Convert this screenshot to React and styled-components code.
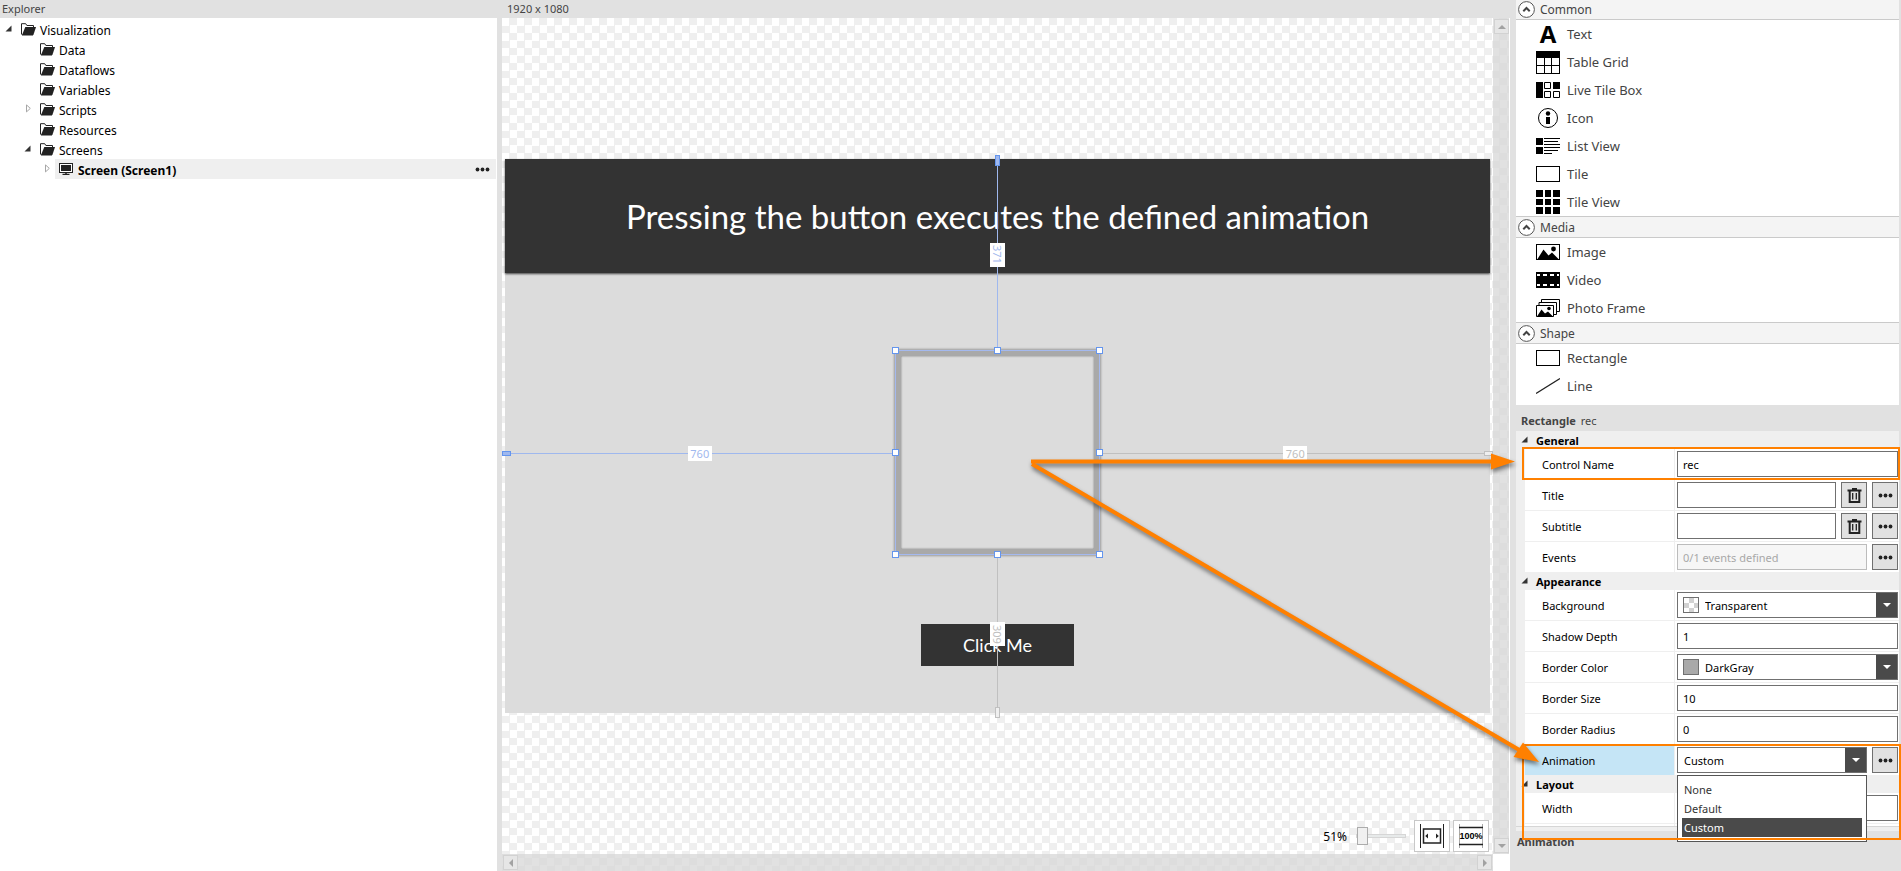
import React from 'react';
import styled, { createGlobalStyle, css } from 'styled-components';

const GlobalStyle = createGlobalStyle`
  * { box-sizing: border-box; }
  body { margin: 0; background: #e1e1e1; }
  body, button, input, select {
    font-family: "Noto Sans", "Open Sans", sans-serif;
    font-size: 11px;
    color: #000;
  }
  button { padding: 0; border: 0; background: none; }
  h1, h2, h3, ul, p { margin: 0; padding: 0; font-size: inherit; font-weight: inherit; }
  ul { list-style: none; }
`;

const checker = css`
  background: repeating-conic-gradient(#efefef 0 25%, #fff 0 50%) 0 0 / 15px 15px;
`;

const Workbench = styled.div`
  position: relative;
  display: grid;
  grid-template-columns: 497px minmax(0, 1fr) 391px;
  height: 100vh;
  min-height: 860px;
  overflow: hidden;
`;

/* ---------- Explorer ---------- */

const Explorer = styled.nav`
  display: flex;
  flex-direction: column;
`;

const PaneTitle = styled.h2`
  height: 18px;
  padding-left: ${(p) => p.$indent}px;
  line-height: 18px;
  color: #444;
`;

const Tree = styled.ul`
  flex: 1;
  padding-top: 1px;
  background: #fff;
`;

const TreeRow = styled.li`
  display: flex;
  height: 20px;
  padding-left: ${(p) => p.$depth * 19}px;
  padding-right: 1px;
  font-size: 12px;
`;

const Twisty = styled.span`
  display: flex;
  flex: none;
  align-items: center;
  width: 17px;
  padding-left: 5px;
  padding-bottom: 2px;
`;

const TreeLabel = styled.span`
  display: flex;
  flex: 1;
  align-items: center;
  gap: 4px;
  padding: 0 6px 0 4px;
  background: ${(p) => (p.$selected ? '#efefef' : 'transparent')};
  font-weight: ${(p) => (p.$selected ? 700 : 400)};
  line-height: 20px;
`;

const TreeText = styled.span`
  flex: 1;
  padding-top: 3px;
  line-height: 17px;
`;

const DotsButton = styled.button`
  display: flex;
  align-items: center;
  justify-content: center;
  height: 20px;
`;

/* ---------- Canvas ---------- */

const Designer = styled.main`
  display: flex;
  flex-direction: column;
  min-width: 0;
  padding-left: 5px;
`;

const Viewport = styled.div`
  display: grid;
  flex: 1;
  grid-template-columns: minmax(0, 1fr) 16px;
  grid-template-rows: minmax(0, 1fr) 17px;
  border-right: 1px solid #fff;
  ${checker}
`;

const Stage = styled.div`
  position: relative;
  display: flex;
  align-items: center;
  justify-content: center;
`;

const Scene = styled.section`
  position: relative;
  width: calc(100% - 6px);
  height: 554px;
  background: #dcdcdc;
`;

const Banner = styled.h1`
  display: flex;
  align-items: center;
  justify-content: center;
  height: 114px;
  background: #333;
  box-shadow: 0 1px 2px rgba(0, 0, 0, 0.7);
  color: #fff;
  font-family: Lato, sans-serif;
  font-size: 33px;
  line-height: 40px;
`;

const SceneButton = styled.button`
  position: absolute;
  right: 0;
  bottom: 47px;
  left: 0;
  width: 153px;
  height: 42px;
  margin: 0 auto;
  background: #333;
  color: #fff;
  font-family: Lato, sans-serif;
  font-size: 18px;
`;

const Shape = styled.div`
  position: absolute;
  top: 191px;
  right: 0;
  left: 0;
  width: 205px;
  height: 205px;
  margin: 0 auto;
  border: 6px solid #a9a9a9;
  box-shadow: 0 0 2px 1px rgba(0, 0, 0, 0.3), inset 0 0 2px rgba(0, 0, 0, 0.5);
`;

const SelectionFrame = styled.div`
  position: absolute;
  inset: -6px;
  border: 1px solid #a4b9ef;
`;

const HandleFrame = styled.div`
  position: absolute;
  top: 192px;
  right: 0;
  left: 1px;
  width: 204px;
  height: 204px;
  margin: 0 auto;
`;

const Handle = styled.span`
  position: absolute;
  top: ${(p) => p.$y};
  left: ${(p) => p.$x};
  width: 7px;
  height: 7px;
  margin: -4px;
  border: 1px solid #6495ed;
  background: #fff;
`;

const Guide = styled.div`
  position: absolute;
  display: flex;
  align-items: center;
  justify-content: center;
  color: ${(p) => (p.$active ? '#9fb8ee' : '#c0c0c0')};
  background: currentColor;
`;

const GuideLeft = styled(Guide)`
  top: 294px;
  left: 0;
  right: calc(50% + 103px);
  height: 1px;
`;

const GuideRight = styled(Guide)`
  top: 294px;
  left: calc(50% + 103px);
  right: 0;
  height: 1px;
`;

const GuideTop = styled(Guide)`
  top: 0;
  left: 0;
  right: 0;
  width: 1px;
  height: 191px;
  margin: 0 auto;
`;

const GuideBottom = styled(Guide)`
  top: 396px;
  bottom: 0;
  left: 0;
  right: 0;
  width: 1px;
  margin: 0 auto;
`;

const GuideValue = styled.span`
  display: flex;
  flex: none;
  align-items: center;
  justify-content: center;
  width: ${(p) => (p.$vertical ? 15 : 24)}px;
  height: ${(p) => (p.$vertical ? 24 : 15)}px;
  background: #fff;
  writing-mode: ${(p) => (p.$vertical ? 'vertical-rl' : 'horizontal-tb')};
  font-size: 11px;
  line-height: 15px;
`;

const Anchor = styled.span`
  position: absolute;
  width: ${(p) => (p.$vertical ? 5 : 9)}px;
  height: ${(p) => (p.$vertical ? 11 : 5)}px;
  border: 1px solid ${(p) => (p.$active ? '#6495ed' : '#c0c0c0')};
  background: ${(p) => (p.$active ? '#9fb8ee' : '#efefef')};
  ${(p) => p.$side === 'left' && 'left: -3px;'}
  ${(p) => p.$side === 'right' && 'right: -3px;'}
  ${(p) => p.$side === 'top' && 'top: -4px;'}
  ${(p) => p.$side === 'bottom' && 'bottom: -5px;'}
`;

const ScrollTrack = styled.div`
  display: flex;
  flex-direction: ${(p) => (p.$vertical ? 'column' : 'row')};
  justify-content: space-between;
  padding: 1px;
  background: rgba(214, 214, 214, 0.72);
`;

const ScrollButton = styled.button`
  display: flex;
  align-items: center;
  justify-content: center;
  width: 15px;
  height: 15px;
  border: 1px solid #d2d2d2;
  background: #e6e6e6;
`;

const Corner = styled.div`
  background: #fff;
`;

const ZoomBar = styled.div`
  position: absolute;
  right: 4px;
  bottom: 2px;
  display: flex;
  align-items: center;
  height: 32px;
  gap: 3px;
`;

const ZoomLabel = styled.label`
  display: flex;
  align-items: center;
  gap: 9px;
  margin-right: 5px;
  font-size: 12px;
`;

const ZoomRange = styled.input`
  width: 50px;
  height: 18px;
  margin: 0;
  appearance: none;
  background: transparent;

  &::-webkit-slider-runnable-track {
    height: 4px;
    border: 1px solid #d6d6d6;
    background: #e7eaea;
  }
  &::-webkit-slider-thumb {
    width: 11px;
    height: 18px;
    margin-top: -8px;
    appearance: none;
    border: 1px solid #acacac;
    border-radius: 0;
    background: #f0f0f0;
  }
`;

const ZoomButton = styled.button`
  display: flex;
  align-items: center;
  justify-content: center;
  width: 36px;
  height: 32px;
  border: 1px solid #c8c8c8;
  background: #fff;
`;

/* ---------- Side panel ---------- */

const SidePanel = styled.aside`
  display: flex;
  flex-direction: column;
  min-height: 0;
  padding: 0 2px 0 6px;
`;

const Palette = styled.div`
  padding-bottom: 5px;
  background: #fff;
`;

const PaletteHeader = styled.button`
  display: flex;
  align-items: center;
  gap: 5px;
  width: 100%;
  height: ${(p) => (p.$first ? 20 : 22)}px;
  padding-top: ${(p) => (p.$first ? 0 : 1)}px;
  padding-left: 2px;
  border-top: ${(p) => (p.$first ? 0 : 1)}px solid #cacaca;
  border-bottom: 1px solid #cacaca;
  background: #f4f4f4;
  color: #444;
  font-size: 12px;
  line-height: 16px;
`;

const PaletteItem = styled.button`
  display: grid;
  grid-template-columns: 24px 1fr;
  align-items: center;
  column-gap: 7px;
  width: 100%;
  height: 28px;
  padding-left: 20px;
  color: #444;
  font-size: 13px;
  line-height: 18px;
  text-align: left;
`;

const LetterIcon = styled.span`
  color: #000;
  font-size: 24px;
  font-weight: 700;
  line-height: 28px;
  text-align: center;
`;

const ObjectTitle = styled.h2`
  display: flex;
  gap: 5px;
  align-items: center;
  height: 26px;
  padding-top: 4px;
  padding-left: 5px;
  color: #444;
`;

const Strong = styled.strong`
  font-weight: 700;
`;

const Properties = styled.div`
  display: flex;
  flex: 1;
  flex-direction: column;
  min-height: 0;
  padding-bottom: 4px;
  background: #efefef;
`;

const Category = styled.h3`
  display: flex;
  flex: none;
  align-items: center;
  gap: 8px;
  height: 18px;
  padding-top: 1px;
  padding-left: 5px;
  font-weight: 700;
  line-height: 16px;

  svg { margin-bottom: 2px; }
`;

const Group = styled.div`
  padding-left: 9px;
  ${(p) => p.$clipped && 'flex: 1; min-height: 0; overflow: hidden; border-bottom: 1px solid #d6d6d6;'}
`;

const PropertyRow = styled.div`
  display: grid;
  grid-template-columns: 149px minmax(0, 1fr);
  column-gap: 1px;
  height: 31px;
  border-bottom: 1px solid #efefef;

  &:last-child { height: 30px; border-bottom: 0; }
`;

const PropertyLabel = styled.label`
  display: flex;
  align-items: center;
  padding-left: 17px;
  background: ${(p) => (p.$selected ? '#c5e5f6' : '#fff')};
`;

const ValueCell = styled.div`
  position: relative;
  display: flex;
  align-items: flex-start;
  gap: 5px;
  padding: 2px 1px 0 2px;
  background: #fff;
`;

const TextBox = styled.input`
  flex: 1;
  min-width: 0;
  height: 26px;
  padding: 0 5px;
  border: 1px solid #707070;
  border-radius: 0;
  background: #fff;
  outline: none;

  &:disabled { border-color: #bcbcbc; background: #f6f6f6; color: #a8a8a8; }
`;

const ToolButton = styled.button`
  display: flex;
  flex: none;
  align-items: center;
  justify-content: center;
  width: 26px;
  height: 26px;
  border: 1px solid #707070;
  background: #e1e1e1;
`;

const Combo = styled.span`
  display: flex;
  flex: 1;
  align-items: center;
  min-width: 0;
  height: 26px;
  padding-left: 5px;
  border: 1px solid #707070;
  background: #fff;
`;

const Swatch = styled.span`
  flex: none;
  width: 16px;
  height: 16px;
  margin-right: 5px;
  border: 1px solid #707070;
  background: ${(p) =>
    p.$color || 'repeating-conic-gradient(#d2d2d2 0 25%, #fff 0 50%) 0 0 / 10px 10px'};
`;

const Select = styled.select`
  flex: 1;
  min-width: 0;
  height: 24px;
  padding: 0 1px;
  appearance: none;
  border: 0;
  background: transparent;
  outline: none;
`;

const ComboArrow = styled.span`
  display: flex;
  align-items: center;
  justify-content: center;
  width: 21px;
  height: 24px;
  padding-left: 1px;
  background: #4a4a4a;
`;

const OptionList = styled.ul`
  position: absolute;
  z-index: 1;
  top: 30px;
  left: 2px;
  width: 190px;
  padding: 4px;
  border: 1px solid #555;
  background: #fff;
`;

const Option = styled.li`
  height: 19px;
  padding-left: 2px;
  line-height: 20px;
  background: ${(p) => (p.$selected ? '#4a4a4a' : '#fff')};
  color: ${(p) => (p.$selected ? '#fff' : '#333')};
`;

const Description = styled.footer`
  height: 40px;
  padding-top: 3px;
  padding-left: 1px;
  color: #444;
  font-weight: 700;
  line-height: 16px;
`;

const Annotations = styled.svg`
  position: absolute;
  z-index: 2;
  top: 0;
  right: 0;
  pointer-events: none;
`;

const ArrowGroup = styled.g`
  filter: drop-shadow(1px 3px 2px rgba(0, 0, 0, 0.5));
`;

/* ---------- Icons ---------- */

const FolderIcon = () => (
  <svg width="15" height="13" viewBox="0 0 15 13" aria-hidden="true">
    <path d="M.5 11.5V.7h4.2l1.2 1.8h6.6v1.8" fill="none" stroke="#222" />
    <path d="M4.3 4H15l-2.6 8H1z" fill="#222" />
    <path d="M1 12h11" stroke="#222" />
  </svg>
);

const ScreenIcon = () => (
  <svg width="15" height="12" viewBox="0 0 15 12" aria-hidden="true">
    <rect x=".5" y=".5" width="13" height="9" fill="#fff" stroke="#222" />
    <rect x="2" y="2" width="10" height="6" fill="#222" />
    <path d="M7 9v2M3.500 11.400h7" stroke="#222" strokeWidth="1.500" />
  </svg>
);

const OpenMark = () => (
  <svg width="7" height="7" viewBox="0 0 7 7" aria-hidden="true">
    <path d="M6.500 .5v6H.5z" fill="#333" />
  </svg>
);

const ClosedMark = () => (
  <svg width="8" height="9" viewBox="0 0 8 9" aria-hidden="true">
    <path d="M2.500 .9v7l3.800-3.500z" fill="#fff" stroke="#a6a6a6" />
  </svg>
);

const Dots = () => (
  <svg width="15" height="5" viewBox="0 0 15 5" aria-hidden="true">
    {[2.5, 7.5, 12.5].map((x) => (
      <circle key={x} cx={x} cy="2.5" r="1.9" fill="#222" />
    ))}
  </svg>
);

const TrashIcon = () => (
  <svg width="15" height="15" viewBox="0 0 15 15" fill="none" stroke="#222" aria-hidden="true">
    <path d="M.5 2.500h14M5 1h5" strokeWidth="2" />
    <path d="M2.700 3v11h9.600V3" strokeWidth="2" />
    <path d="M5.700 5v6.500M9.300 5v6.500" strokeWidth="1.300" />
  </svg>
);

const CollapseIcon = () => (
  <svg width="17" height="17" viewBox="0 0 17 17" fill="none" aria-hidden="true">
    <circle cx="8.500" cy="8.500" r="7.900" fill="#fff" stroke="#555" />
    <path d="M5.300 10.200l3.200-3.200 3.200 3.200" stroke="#444" strokeWidth="2" />
  </svg>
);

const ComboChevron = () => (
  <svg width="8" height="4" viewBox="0 0 8 4" aria-hidden="true">
    <path d="M0 0h8L4 4z" fill="#fff" />
  </svg>
);

const turns = { up: 0, right: 90, down: 180, left: 270 };
const ScrollArrow = ({ to }) => (
  <svg width="8" height="8" viewBox="0 0 8 8" aria-hidden="true">
    <path d="M0 6l4-4 4 4z" fill="#a2a2a2" transform={`rotate(${turns[to]} 4 4)`} />
  </svg>
);

const FitIcon = () => (
  <svg width="24" height="24" viewBox="0 0 24 24" fill="none" stroke="#222" aria-hidden="true">
    <path d="M.5 0v24M23.500 0v24" />
    <rect x="3.500" y="5" width="17" height="14" strokeWidth="1.500" />
    <path d="M8 9.500v5L5.200 12zM16 9.500v5l2.800-2.500z" fill="#222" stroke="none" />
  </svg>
);

const FullSizeIcon = () => (
  <svg width="26" height="24" viewBox="0 0 26 24" aria-hidden="true">
    <path d="M1.500 0v24M24.500 0v24" stroke="#aaa" />
    <path d="M1 3.500h24M1 20.500h24" stroke="#222" strokeWidth="1.400" />
    <text x="13" y="15" textAnchor="middle" fontFamily="Liberation Sans" fontWeight="700" fontSize="9">100%</text>
  </svg>
);

const PaletteSvg = ({ children }) => (
  <svg width="24" height="24" viewBox="0 0 24 24" aria-hidden="true">{children}</svg>
);

const BoxIcon = () => (
  <PaletteSvg>
    <rect x=".5" y="4.500" width="23" height="15" fill="#fff" stroke="#000" />
  </PaletteSvg>
);

const icons = {
  text: <LetterIcon aria-hidden="true">A</LetterIcon>,
  table: (
    <PaletteSvg>
      <rect x=".5" y="1.500" width="23" height="22" fill="#fff" stroke="#000" />
      <path d="M0 1h24v7H0z" />
      <path d="M8.500 8v16M15.500 8v16M0 15.500h24" stroke="#000" />
    </PaletteSvg>
  ),
  live: (
    <PaletteSvg>
      <path d="M0 4h7v16H0zM17 4h7v7h-7z" />
      <path d="M8.500 4.500h6v6h-6zM8.500 13.500h6v6h-6zM17.500 13.500h6v6h-6z" fill="#fff" stroke="#000" />
    </PaletteSvg>
  ),
  info: (
    <PaletteSvg>
      <circle cx="12" cy="12" r="9.500" fill="#fff" stroke="#000" />
      <circle cx="12" cy="7.500" r="2.200" />
      <path d="M10 11h4v7h-4z" />
    </PaletteSvg>
  ),
  list: (
    <PaletteSvg>
      <path d="M0 4h7v7H0zM0 13h7v7H0z" />
      <path d="M8 4.500h16M8 7.500h14M8 10.500h16M8 13.500h16M8 16.500h14M8 19.500h8" stroke="#000" />
    </PaletteSvg>
  ),
  box: <BoxIcon />,
  tiles: (
    <PaletteSvg>
      <path d="M0 0h7v7H0zM9 0h6v7H9zM17 0h7v7h-7zM0 9h7v6H0zM9 9h6v6H9zM17 9h7v6h-7zM0 17h7v7H0zM9 17h6v7H9zM17 17h7v7h-7z" />
    </PaletteSvg>
  ),
  image: (
    <PaletteSvg>
      <rect x=".5" y="4.500" width="23" height="15" fill="#fff" stroke="#000" />
      <path d="M1.500 19l6-9.500 5 6 3.500-3 6.500 6.500z" />
      <circle cx="17.500" cy="9" r="2.400" />
    </PaletteSvg>
  ),
  video: (
    <PaletteSvg>
      <path d="M0 4h24v16H0z" />
      <path d="M1 7h22M1 17h22" stroke="#fff" strokeWidth="2" strokeDasharray="3 3 4 3 4 3 4 3" />
    </PaletteSvg>
  ),
  photos: (
    <PaletteSvg>
      <path d="M5.500 3.500h18v12h-18z" fill="#fff" stroke="#000" />
      <path d="M3 6.500h17.500v12H3z" fill="#fff" stroke="#000" />
      <path d="M.5 9.500h17v11H.5z" fill="#fff" stroke="#000" />
      <path d="M1 20.500l4.500-7 3.500 4 3-2 5 5z" />
      <circle cx="13" cy="12.500" r="1.800" />
    </PaletteSvg>
  ),
  line: (
    <PaletteSvg>
      <path d="M0 19.500L24 4.500" stroke="#222" strokeWidth="1.300" />
    </PaletteSvg>
  ),
};

/* ---------- Data ---------- */

const tree = [
  { name: 'Visualization', depth: 0, state: 'open' },
  { name: 'Data', depth: 1 },
  { name: 'Dataflows', depth: 1 },
  { name: 'Variables', depth: 1 },
  { name: 'Scripts', depth: 1, state: 'closed' },
  { name: 'Resources', depth: 1 },
  { name: 'Screens', depth: 1, state: 'open' },
  { name: 'Screen (Screen1)', depth: 2, state: 'closed', selected: true },
];

const palette = [
  ['Common', [['Text', 'text'], ['Table Grid', 'table'], ['Live Tile Box', 'live'], ['Icon', 'info'], ['List View', 'list'], ['Tile', 'box'], ['Tile View', 'tiles']]],
  ['Media', [['Image', 'image'], ['Video', 'video'], ['Photo Frame', 'photos']]],
  ['Shape', [['Rectangle', 'box'], ['Line', 'line']]],
];

const handles = [
  ['0%', '0%'], ['50%', '0%'], ['100%', '0%'],
  ['0%', '50%'], ['100%', '50%'],
  ['0%', '100%'], ['50%', '100%'], ['100%', '100%'],
];

/* ---------- Parts ---------- */

const Property = ({ id, label, selected, children }) => (
  <PropertyRow>
    <PropertyLabel htmlFor={id} $selected={selected}>{label}</PropertyLabel>
    <ValueCell>{children}</ValueCell>
  </PropertyRow>
);

const TextProperty = ({ id, label, value = '', localized }) => (
  <Property id={id} label={label}>
    <TextBox id={id} type="text" defaultValue={value} />
    {localized && (
      <>
        <ToolButton aria-label={`Clear ${label}`}><TrashIcon /></ToolButton>
        <ToolButton aria-label={`Edit ${label}`}><Dots /></ToolButton>
      </>
    )}
  </Property>
);

const ComboBox = ({ id, options, swatch, color }) => (
  <Combo>
    {swatch && <Swatch $color={color} />}
    <Select id={id} defaultValue={options[0]}>
      {options.map((o) => <option key={o}>{o}</option>)}
    </Select>
    <ComboArrow><ComboChevron /></ComboArrow>
  </Combo>
);

const CategoryTitle = ({ children }) => (
  <Category><OpenMark />{children}</Category>
);

export default function App() {
  return (
    <>
      <GlobalStyle />
      <Workbench>
        <Explorer>
          <PaneTitle $indent={2}>Explorer</PaneTitle>
          <Tree>
            {tree.map(({ name, depth, state, selected }) => (
              <TreeRow key={name} $depth={depth}>
                <Twisty>
                  {state === 'open' && <OpenMark />}
                  {state === 'closed' && <ClosedMark />}
                </Twisty>
                <TreeLabel $selected={selected}>
                  {selected ? <ScreenIcon /> : <FolderIcon />}
                  <TreeText>{name}</TreeText>
                  {selected && <DotsButton aria-label="Screen actions"><Dots /></DotsButton>}
                </TreeLabel>
              </TreeRow>
            ))}
          </Tree>
        </Explorer>

        <Designer>
          <PaneTitle $indent={5}>1920 x 1080</PaneTitle>
          <Viewport>
            <Stage>
              <Scene>
                <Banner>Pressing the button executes the defined animation</Banner>
                <SceneButton>Click Me</SceneButton>
                <Shape>
                  <SelectionFrame />
                </Shape>
                <GuideLeft $active>
                  <GuideValue>760</GuideValue>
                  <Anchor $side="left" $active />
                </GuideLeft>
                <GuideRight>
                  <GuideValue>760</GuideValue>
                  <Anchor $side="right" />
                </GuideRight>
                <GuideTop $active>
                  <GuideValue $vertical>371</GuideValue>
                  <Anchor $side="top" $vertical $active />
                </GuideTop>
                <GuideBottom>
                  <GuideValue $vertical>309</GuideValue>
                  <Anchor $side="bottom" $vertical />
                </GuideBottom>
                <HandleFrame>
                  {handles.map(([x, y]) => <Handle key={x + y} $x={x} $y={y} />)}
                </HandleFrame>
              </Scene>
              <ZoomBar>
                <ZoomLabel>
                  51%
                  <ZoomRange type="range" min="50" max="400" defaultValue="50" />
                </ZoomLabel>
                <ZoomButton aria-label="Fit to window"><FitIcon /></ZoomButton>
                <ZoomButton aria-label="Actual size"><FullSizeIcon /></ZoomButton>
              </ZoomBar>
            </Stage>
            <ScrollTrack $vertical>
              <ScrollButton aria-label="Scroll up"><ScrollArrow to="up" /></ScrollButton>
              <ScrollButton aria-label="Scroll down"><ScrollArrow to="down" /></ScrollButton>
            </ScrollTrack>
            <ScrollTrack>
              <ScrollButton aria-label="Scroll left"><ScrollArrow to="left" /></ScrollButton>
              <ScrollButton aria-label="Scroll right"><ScrollArrow to="right" /></ScrollButton>
            </ScrollTrack>
            <Corner />
          </Viewport>
        </Designer>

        <SidePanel>
          <Palette>
            {palette.map(([title, items], i) => (
              <div key={title}>
                <PaletteHeader $first={i === 0} aria-expanded="true">
                  <CollapseIcon />{title}
                </PaletteHeader>
                {items.map(([name, icon]) => (
                  <PaletteItem key={name}>{icons[icon]}{name}</PaletteItem>
                ))}
              </div>
            ))}
          </Palette>

          <ObjectTitle><Strong>Rectangle</Strong>rec</ObjectTitle>
          <Properties>
            <CategoryTitle>General</CategoryTitle>
            <Group>
              <TextProperty id="name" label="Control Name" value="rec" />
              <TextProperty id="title" label="Title" localized />
              <TextProperty id="subtitle" label="Subtitle" localized />
              <Property id="events" label="Events">
                <TextBox id="events" type="text" defaultValue="0/1 events defined" disabled />
                <ToolButton aria-label="Edit events"><Dots /></ToolButton>
              </Property>
            </Group>
            <CategoryTitle>Appearance</CategoryTitle>
            <Group>
              <Property id="background" label="Background">
                <ComboBox id="background" options={['Transparent']} swatch />
              </Property>
              <TextProperty id="shadow" label="Shadow Depth" value="1" />
              <Property id="border-color" label="Border Color">
                <ComboBox id="border-color" options={['DarkGray']} swatch color="#a9a9a9" />
              </Property>
              <TextProperty id="border-size" label="Border Size" value="10" />
              <TextProperty id="border-radius" label="Border Radius" value="0" />
              <Property id="animation" label="Animation" selected>
                <ComboBox id="animation" options={['Custom', 'Default', 'None']} />
                <ToolButton aria-label="Edit animation"><Dots /></ToolButton>
                <OptionList role="listbox" aria-label="Animation">
                  <Option role="option">None</Option>
                  <Option role="option">Default</Option>
                  <Option role="option" $selected aria-selected="true">Custom</Option>
                </OptionList>
              </Property>
            </Group>
            <CategoryTitle>Layout</CategoryTitle>
            <Group $clipped>
              <TextProperty id="width" label="Width" />
              <TextProperty id="height" label="" />
            </Group>
          </Properties>
          <Description>Animation</Description>
        </SidePanel>

        <Annotations width="885" height="871" fill="none" stroke="#ff8000" aria-hidden="true">
          <rect x="507" y="448" width="376" height="31" strokeWidth="2" />
          <rect x="507" y="745" width="377" height="94" strokeWidth="2" />
          <ArrowGroup>
            <path d="M15 461.500H477M16 464L505 751" strokeWidth="4" />
            <path d="M475 453.500L499 461.500L475 469.500z" fill="#ff8000" stroke="none" />
            <path d="M523 762L507 742.500L497.500 757z" fill="#ff8000" stroke="none" />
          </ArrowGroup>
        </Annotations>
      </Workbench>
    </>
  );
}
